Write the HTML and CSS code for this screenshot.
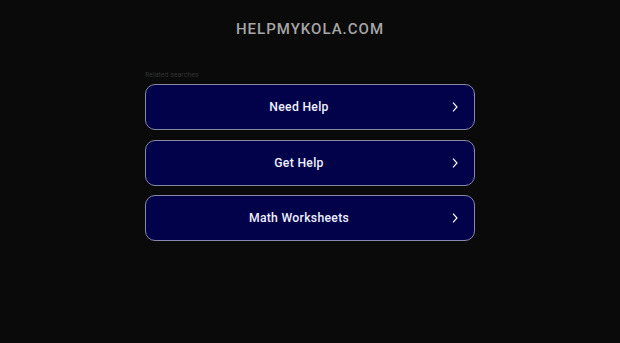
FILE: index.html
```html
<!DOCTYPE html>
<html>
<head>
  <meta charset="utf-8">
  <title>helpmykola.com</title>
  <link rel="stylesheet" href="styles.css">
</head>
<body>

<h1 class="domain">HELPMYKOLA.COM</h1>

<div class="searches">
  <div class="label">Related searches</div>
  <a class="link" href="#"><span>Need Help</span><svg viewBox="0 0 10 14" width="8" height="12"><path d="M2.5 1.5 L7.5 7 L2.5 12.5" fill="none" stroke="#fff" stroke-width="1.5"/></svg></a>
  <a class="link" href="#"><span>Get Help</span><svg viewBox="0 0 10 14" width="8" height="12"><path d="M2.5 1.5 L7.5 7 L2.5 12.5" fill="none" stroke="#fff" stroke-width="1.5"/></svg></a>
  <a class="link" href="#"><span>Math Worksheets</span><svg viewBox="0 0 10 14" width="8" height="12"><path d="M2.5 1.5 L7.5 7 L2.5 12.5" fill="none" stroke="#fff" stroke-width="1.5"/></svg></a>
</div>

</body>
</html>
```

FILE: styles.css
```css
body { margin:0; background:#0a0a0a; font-family:Roboto, "Liberation Sans", Arial, sans-serif; height:343px; }
.domain { margin:0; padding-top:20px; text-align:center; font-size:15px; line-height:18px; font-weight:500; letter-spacing:1px; color:#a6a6a6; }
.searches { width:330px; margin:0 auto; padding-top:33px; }
.label { font-size:7px; color:#333; height:13px; line-height:8px; }
.link { position:relative; display:flex; align-items:center; justify-content:center; box-sizing:border-box; height:46px; padding-right:22px; margin-bottom:9.5px; background:#02024a; border:1px solid #8888a8; border-radius:10px; color:#eef0ff; text-decoration:none; font-size:12.2px; font-weight:500; letter-spacing:0.3px; }
.link svg { position:absolute; right:15px; top:16px; }
```
